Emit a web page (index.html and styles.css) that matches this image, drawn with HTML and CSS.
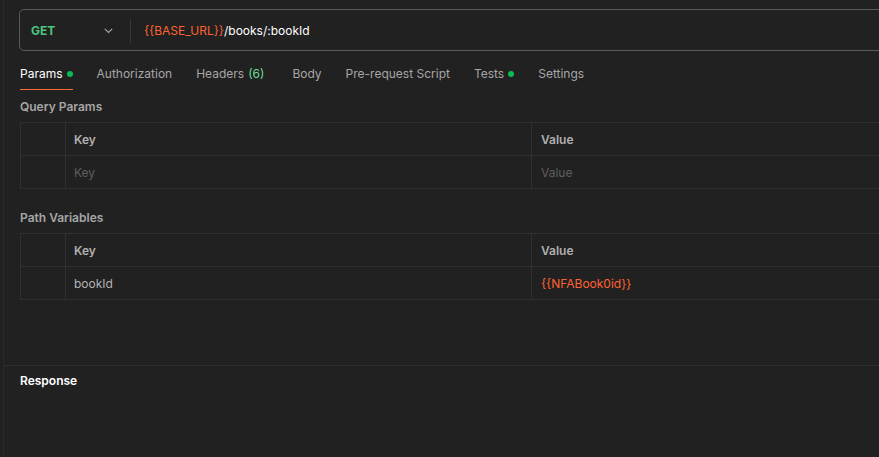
FILE: index.html
```html
<!DOCTYPE html>
<html lang="en">
<head>
<meta charset="utf-8">
<title>Request</title>
<link rel="stylesheet" href="styles.css">
</head>
<body>
<div class="app">
  <div class="side-edge"></div>
  <main class="main">
    <section class="request">
      <div class="url-bar">
        <div class="method">
          <span class="method-name">GET</span>
          <svg class="chevron" width="9" height="6" viewBox="0 0 9 6"><polyline points="0.8,0.8 4.5,4.5 8.2,0.8" fill="none" stroke="#a6a6a6" stroke-width="1.2"/></svg>
        </div>
        <div class="url-divider"></div>
        <div class="url-text"><span class="var">{{BASE_URL}}</span>/books/:bookId</div>
      </div>

      <nav class="tabs">
        <div class="tab active">Params <span class="dot"></span></div>
        <div class="tab">Authorization</div>
        <div class="tab tab-headers">Headers <span class="count">(6)</span></div>
        <div class="tab">Body</div>
        <div class="tab">Pre-request Script</div>
        <div class="tab">Tests <span class="dot"></span></div>
        <div class="tab">Settings</div>
      </nav>

      <h3 class="section-label">Query Params</h3>
      <div class="kv-table">
        <div class="kv-row head">
          <div class="cell check"></div>
          <div class="cell key">Key</div>
          <div class="cell value">Value</div>
        </div>
        <div class="kv-row">
          <div class="cell check"></div>
          <div class="cell key placeholder">Key</div>
          <div class="cell value placeholder">Value</div>
        </div>
      </div>

      <h3 class="section-label path-label">Path Variables</h3>
      <div class="kv-table">
        <div class="kv-row head">
          <div class="cell check"></div>
          <div class="cell key">Key</div>
          <div class="cell value">Value</div>
        </div>
        <div class="kv-row">
          <div class="cell check"></div>
          <div class="cell key filled">bookId</div>
          <div class="cell value var">{{NFABook0id}}</div>
        </div>
      </div>
    </section>

    <section class="response">
      <h3 class="response-label">Response</h3>
    </section>
  </main>
</div>
</body>
</html>
```

FILE: styles.css
```css
* { box-sizing: border-box; }

html, body {
  margin: 0;
  padding: 0;
  background: #212121;
  width: 879px;
  height: 457px;
  overflow: hidden;
}

body {
  font-family: Inter, "Noto Sans", "Liberation Sans", sans-serif;
  font-size: 12px;
  line-height: 16px;
  color: #a6a6a6;
}

.app {
  display: flex;
  height: 457px;
}

.side-edge {
  width: 4px;
  flex: none;
  border-right: 1px solid #2b2b2b;
  background: #202020;
}

.main {
  flex: none;
  width: 1100px;
  display: flex;
  flex-direction: column;
}

.request {
  height: 366px;
  border-bottom: 1px solid #303030;
  padding-top: 9px;
}

/* URL bar */
.url-bar {
  margin-left: 15px;
  height: 42px;
  padding-top: 1px;
  border: 1px solid #5a5a5a;
  border-radius: 5px;
  display: flex;
  align-items: center;
}

.method {
  width: 110px;
  display: flex;
  align-items: center;
  justify-content: space-between;
  padding-left: 11px;
  padding-right: 17px;
}

.method-name {
  color: #4fc47f;
  font-weight: 700;
}

.chevron { display: block; }

.url-divider {
  width: 1px;
  height: 24px;
  background: #3a3a3a;
}

.url-text {
  padding-left: 13px;
  color: #ffffff;
}

.var { color: #ff6133; }

/* Tabs */
.tabs {
  display: flex;
  gap: 24px;
  margin-top: 8px;
  padding-left: 16px;
}

.tab {
  display: flex;
  align-items: center;
  gap: 4px;
  padding: 7px 0 7px;
  border-bottom: 1px solid transparent;
  color: #a6a6a6;
  white-space: nowrap;
}

.tab.active {
  color: #ffffff;
  border-bottom-color: #ff6c37;
}

.tab-headers { margin-right: 4px; }

.count { color: #6bdd9a; }

.dot {
  width: 6px;
  height: 6px;
  border-radius: 50%;
  background: #0cbb52;
}

/* Sections */
.section-label {
  margin: 9px 0 7px 16px;
  font-size: 12px;
  line-height: 16px;
  font-weight: 600;
  color: #a6a6a6;
}

.path-label { margin-top: 21px; }

.kv-table {
  margin-left: 16px;
  border-top: 1px solid #303030;
  border-left: 1px solid #303030;
}

.kv-row {
  display: grid;
  grid-template-columns: 45px 466px 1fr;
  height: 33px;
  border-bottom: 1px solid #303030;
}

.cell {
  display: flex;
  align-items: center;
  padding-left: 8px;
  padding-top: 2px;
  border-right: 1px solid #303030;
}

.cell.value { padding-left: 9px; }

.kv-row.head .cell {
  font-weight: 600;
  color: #b0b0b0;
}

.placeholder { color: #5e5e5e; }

.filled { color: #b3b3b3; }

/* Response */
.response {
  padding: 7px 16px 0;
}

.response-label {
  margin: 0;
  font-size: 12px;
  line-height: 16px;
  font-weight: 600;
  color: #ffffff;
}
```
